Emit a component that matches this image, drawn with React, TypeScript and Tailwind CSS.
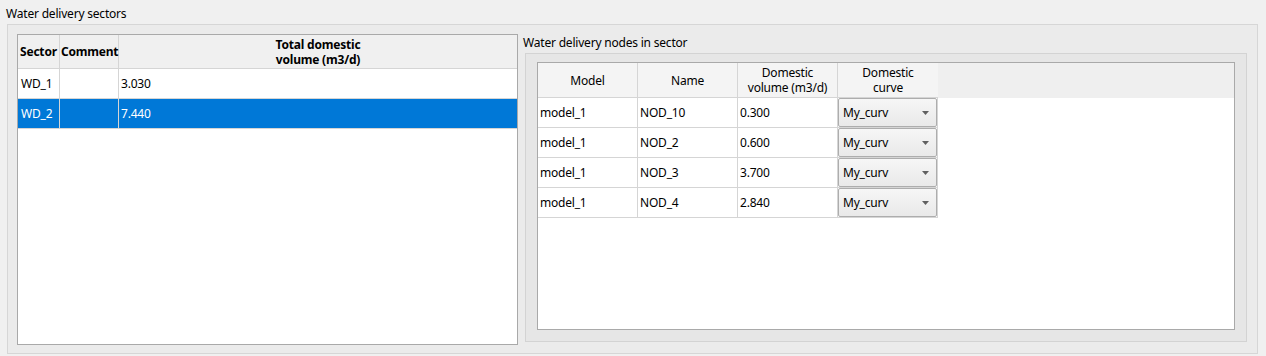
const sectors = [
  { name: 'WD_1', comment: '', total: '3.030' },
  { name: 'WD_2', comment: '', total: '7.440', selected: true },
];

const nodes = [
  { model: 'model_1', name: 'NOD_10', volume: '0.300', curve: 'My_curv' },
  { model: 'model_1', name: 'NOD_2', volume: '0.600', curve: 'My_curv' },
  { model: 'model_1', name: 'NOD_3', volume: '3.700', curve: 'My_curv' },
  { model: 'model_1', name: 'NOD_4', volume: '2.840', curve: 'My_curv' },
];

const Combo = ({ value }: { value: string }) => (
  <div className="flex h-full w-full items-center justify-between rounded-[2px] border border-[#adadad] bg-gradient-to-b from-[#f6f6f6] to-[#e9e9e9] pl-[4px] pr-[7px]">
    <span>{value}</span>
    <svg width="7" height="4" viewBox="0 0 7 4">
      <path d="M0 0 H7 L3.5 4 Z" fill="#606060" />
    </svg>
  </div>
);

const SectorsTable = () => (
  <div className="flex h-[311px] w-[501px] flex-col border border-[#a9a9a9] bg-white">
    <div className="flex h-[34px] border-b border-[#d5d5d5] bg-[#f0f0f0] font-bold leading-[15px]">
      <div className="flex w-[42px] items-center border-r border-[#d5d5d5] pl-[2px]">Sector</div>
      <div className="flex w-[59px] items-center border-r border-[#d5d5d5] pl-[1px]">Comment</div>
      <div className="flex flex-1 items-center justify-center text-center">
        Total domestic
        <br />
        volume (m3/d)
      </div>
    </div>
    {sectors.map((s) => (
      <div
        key={s.name}
        className={
          s.selected
            ? 'flex h-[30px] border-b border-[#d5d5d5] bg-[#0078d7] text-white'
            : 'flex h-[30px] border-b border-[#d5d5d5]'
        }
      >
        <div className="flex w-[42px] items-center border-r border-[#d5d5d5] pl-[3px]">{s.name}</div>
        <div className="flex w-[59px] items-center border-r border-[#d5d5d5]">{s.comment}</div>
        <div className="flex flex-1 items-center pl-[2px]">{s.total}</div>
      </div>
    ))}
  </div>
);

const NodesTable = () => (
  <div className="flex h-[268px] w-[698px] flex-col border border-[#a9a9a9] bg-white">
    <div className="flex h-[35px] bg-[#efefef] leading-[15px]">
      {['Model', 'Name'].map((h) => (
        <div key={h} className="flex w-[100px] items-center justify-center border-r border-b border-[#d5d5d5] bg-[#f4f4f4]">
          {h}
        </div>
      ))}
      <div className="flex w-[100px] items-center justify-center border-r border-b border-[#d5d5d5] bg-[#f4f4f4] text-center">
        Domestic
        <br />
        volume (m3/d)
      </div>
      <div className="flex w-[100px] items-center justify-center border-b border-[#d5d5d5] bg-[#f4f4f4] text-center">
        Domestic
        <br />
        curve
      </div>
    </div>
    {nodes.map((n) => (
      <div key={n.name} className="flex h-[30px]">
        <div className="flex w-[100px] items-center border-r border-b border-[#d5d5d5] pl-[2px]">{n.model}</div>
        <div className="flex w-[100px] items-center border-r border-b border-[#d5d5d5] pl-[2px]">{n.name}</div>
        <div className="flex w-[100px] items-center border-r border-b border-[#d5d5d5] pl-[2px]">{n.volume}</div>
        <div className="flex w-[100px] border-r border-b border-[#d5d5d5]">
          <Combo value={n.curve} />
        </div>
      </div>
    ))}
  </div>
);

export default function App() {
  return (
    <div className="h-[356px] w-[1266px] bg-[#f0f0f0] font-['Noto_Sans',sans-serif] text-[12px] tracking-[-0.2px] text-black">
      <div className="h-[24px] pl-[6px] pt-[6px] leading-[16px]">Water delivery sectors</div>
      <div className="ml-[7px] flex h-[330px] w-[1251px] border border-[#d6d6d6] bg-[#ebebeb] pl-[9px] pt-[9px]">
        <SectorsTable />
        <div className="ml-[7px] flex w-[722px] flex-col">
          <div className="-ml-[2px] h-[19px] pt-[1px] leading-[16px]">Water delivery nodes in sector</div>
          <div className="h-[289px] border border-[#d3d3d3] bg-[#e6e6e6] pl-[11px] pt-[8px]">
            <NodesTable />
          </div>
        </div>
      </div>
    </div>
  );
}
